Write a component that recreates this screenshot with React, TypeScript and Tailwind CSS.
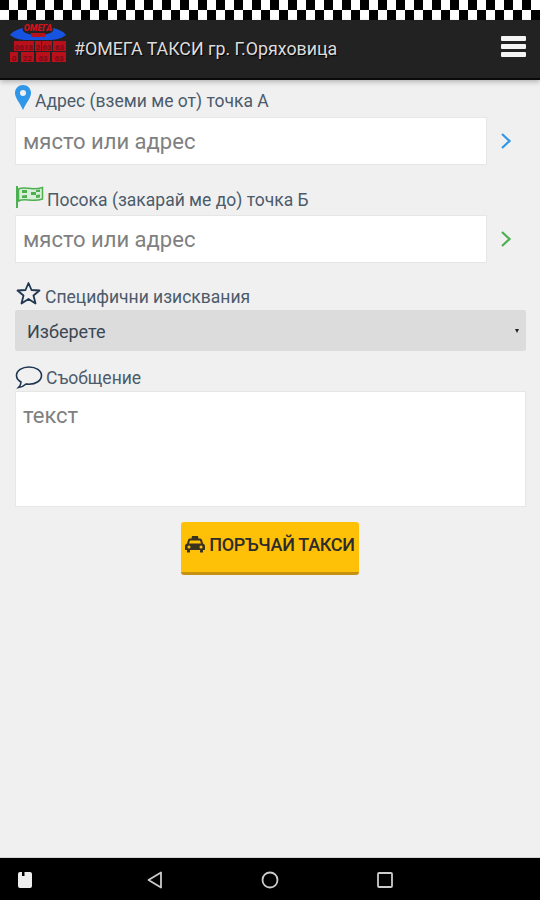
import React from 'react';

const labelClass = 'text-[17.5px] leading-[20px] text-[#4b5b6b]';
const inputClass =
  'w-[472px] h-[48px] bg-white border border-[#e6e6e6] px-[7px] text-[22px] text-[#555] placeholder:text-[#808080] outline-none';

const tiles = [
  { x: 5, y: 18, w: 20, t: '0618' },
  { x: 26, y: 18, w: 6, t: '2' },
  { x: 33, y: 18, w: 10, t: '63' },
  { x: 44, y: 18, w: 13, t: '63' },
  { x: 1, y: 29, w: 8, t: '0' },
  { x: 12, y: 29, w: 13, t: '22' },
  { x: 27, y: 29, w: 14, t: '63' },
  { x: 43, y: 29, w: 14, t: '63' },
];

const Logo = () => (
  <svg width="58" height="40" viewBox="0 0 58 40" className="shrink-0 self-start mt-[3px]">
    <path d="M1 12 C4 8 9 6 14 5 C12 9 18 12 29 12 C40 12 46 9 44 5 C49 6 54 8 57 12 C52 16 46 17 40 17 L18 17 C12 17 6 16 1 12 Z" fill="#1553e0" />
    <text x="29" y="8" textAnchor="middle" fontSize="9" fontWeight="900" fontStyle="italic" fill="#d4111c" fontFamily="Roboto, sans-serif">ОМЕГА</text>
    <rect x="22" y="10" width="14" height="4" fill="#b5121c" />
    {tiles.map((c, i) => (
      <g key={i}>
        <rect x={c.x} y={c.y} width={c.w} height={10} fill="#b9101c" />
        <text x={c.x + c.w / 2} y={c.y + 8.5} textAnchor="middle" fontSize="8" fontWeight="700" fill="#7a0a12" fontFamily="Roboto, sans-serif">{c.t}</text>
      </g>
    ))}
  </svg>
);

const Chevron = ({ color }: { color: string }) => (
  <svg width="12" height="18" viewBox="0 0 12 18" className="ml-[13px] shrink-0">
    <path d="M2 2 L9.500 9 L2 16" fill="none" stroke={color} strokeWidth="2.200" />
  </svg>
);

export default function App() {
  return (
    <div className="w-[540px] h-[900px] flex flex-col bg-[#f0f0f0] overflow-hidden font-['Roboto',sans-serif]">
      {/* шахматна лента */}
      <div className="h-[20px] shrink-0 bg-[repeating-conic-gradient(#fff_0_25%,#000_0_50%)] bg-[length:18px_20px]" />

      <header className="h-[60px] shrink-0 flex items-center pl-[9px] pr-[14px] bg-[#222] border-b-[2px] border-[#0a0a0a] shadow-[0_2px_5px_rgba(0,0,0,0.25)]">
        <Logo />
        <span className="ml-[7px] text-[17.8px] text-[#dcdcdc] [text-shadow:1px_1px_1px_#000]">#ОМЕГА ТАКСИ гр. Г.Оряховица</span>
        <div className="ml-auto w-[25px] flex flex-col gap-[3px] -mt-[5px]">
          <div className="h-[5px] rounded-[1px] bg-[#f4f4f4]" />
          <div className="h-[5px] rounded-[1px] bg-[#f4f4f4]" />
          <div className="h-[5px] rounded-[1px] bg-[#f4f4f4]" />
        </div>
      </header>

      <main className="flex-1 px-[15px] pt-[5px] border-b border-[#d4d4d4]">
        <div className="h-[32px] flex gap-[4px]">
          <svg width="16" height="25" viewBox="0 0 16 25" className="shrink-0">
            <path fillRule="evenodd" d="M8 0 C3.500 0 0 3.500 0 8 C0 13 5 18 8 25 C11 18 16 13 16 8 C16 3.500 12.500 0 8 0 Z M8 5 A3 3 0 1 1 8 11 A3 3 0 1 1 8 5 Z" fill="#2f96e8" />
          </svg>
          <span className={`${labelClass} mt-[6px]`}>Адрес (вземи ме от) точка А</span>
        </div>
        <div className="flex items-center">
          <input className={inputClass} placeholder="място или адрес" readOnly />
          <Chevron color="#2f96e8" />
        </div>

        <div className="h-[30px] mt-[20px] flex gap-[3px]">
          <svg width="29" height="24" viewBox="0 0 29 24" className="shrink-0">
            <path d="M2 1 L2 23" stroke="#4caf50" strokeWidth="2" />
            <path d="M3.500 4 C10 1 16 6 27.500 2.500 L27.500 14 C17 18 10 12 3.500 16 Z" fill="#d9efd9" stroke="#4caf50" strokeWidth="1.500" />
            <path d="M7 5 L12 5 L12 8 L7 8 Z M16 7 L21 7 L21 10 L16 10 Z M7 10.500 L12 10 L12 13 L7 13 Z M21 5 L25 4.500 L25 7 L21 7 Z M21 10 L25 9.500 L25 12.500 L21 13 Z" fill="#4caf50" />
          </svg>
          <span className={`${labelClass} mt-[5px]`}>Посока (закарай ме до) точка Б</span>
        </div>
        <div className="flex items-center">
          <input className={inputClass} placeholder="място или адрес" readOnly />
          <Chevron color="#4caf50" />
        </div>

        <div className="h-[29px] mt-[18px] flex gap-[4px]">
          <svg width="25" height="24" viewBox="0 0 25 24" className="shrink-0 ml-[1px]">
            <path d="M12.500 2 L15.500 9 L23.500 9.500 L17.500 14.500 L19.500 22.500 L12.500 18 L5.500 22.500 L7.500 14.500 L1.500 9.500 L9.500 9 Z" fill="none" stroke="#1f3550" strokeWidth="1.800" strokeLinejoin="round" />
          </svg>
          <span className={`${labelClass} mt-[6px]`}>Специфични изисквания</span>
        </div>
        <div className="h-[41px] -mr-[1px] flex items-center pl-[12px] pr-[7px] bg-[#dcdcdc] rounded-[2px]">
          <span className="text-[18px] mt-[1px] text-[#3a4654]">Изберете</span>
          <div className="ml-auto w-0 h-0 border-x-[2px] border-x-transparent border-t-[4px] border-t-[#222]" />
        </div>

        <div className="h-[26px] mt-[14px] flex gap-[3px]">
          <svg width="28" height="24" viewBox="0 0 28 24" className="shrink-0">
            <path d="M14 2 C7 2 1.500 5.500 1.500 10.500 C1.500 13.500 3.500 15.500 6 17 C6 19 5 21 3.500 22.500 C7 22 9.500 20.500 11 19 C12 19 13 19.200 14 19.200 C21 19.200 26.500 15.500 26.500 10.500 C26.500 5.500 21 2 14 2 Z" fill="none" stroke="#1f3550" strokeWidth="1.600" />
          </svg>
          <span className={`${labelClass} mt-[3px]`}>Съобщение</span>
        </div>
        <textarea
          className="block w-[511px] h-[116px] resize-none bg-white border border-[#e6e6e6] px-[7px] py-[12px] text-[22px] leading-[24px] placeholder:text-[#808080] outline-none"
          placeholder="текст"
          readOnly
        />

        <div className="flex justify-center mt-[15px]">
          <button className="w-[178px] h-[53px] pb-[5px] flex items-center justify-center gap-[4px] bg-[#ffc107] border-b-[3px] border-[#c69214] rounded-[3px] text-[#2c2c2c]">
            <svg width="20" height="17" viewBox="0 0 20 17" className="shrink-0">
              <path fillRule="evenodd" d="M7 0 H13 L13.500 2.500 H15 C16 2.500 16.500 3 17 4 L18 7.500 C19.200 8 20 9 20 10 V14 H18 V16.500 H15 V14 H5 V16.500 H2 V14 H0 V10 C0 9 0.800 8 2 7.500 L3 4 C3.500 3 4 2.500 5 2.500 H6.500 Z M5 4.500 L4 7.500 H16 L15 4.500 Z M4 9.500 A1.500 1.500 0 1 0 4 12.500 A1.500 1.500 0 1 0 4 9.500 Z M16 9.500 A1.500 1.500 0 1 0 16 12.500 A1.500 1.500 0 1 0 16 9.500 Z" fill="#3a3320" />
            </svg>
            <span className="text-[18px] font-medium tracking-[-0.3px] whitespace-nowrap">ПОРЪЧАЙ ТАКСИ</span>
          </button>
        </div>
      </main>

      <nav className="h-[42px] pt-[2px] shrink-0 flex items-center bg-black">
        <svg width="16" height="18" viewBox="0 0 16 18" className="ml-[17px]">
          <path d="M1 3 Q1 1 3 1 H5 V5 H7.500 V1 H13 Q15 1 15 3 V15 Q15 17 13 17 H3 Q1 17 1 15 Z" fill="#eee" />
        </svg>
        <svg width="16" height="18" viewBox="0 0 16 18" className="ml-[114px]">
          <path d="M14 1.500 V16.500 L1.500 9 Z" fill="none" stroke="#ccc" strokeWidth="1.800" strokeLinejoin="round" />
        </svg>
        <svg width="18" height="18" viewBox="0 0 18 18" className="ml-[98px]">
          <circle cx="9" cy="9" r="7.500" fill="none" stroke="#ccc" strokeWidth="1.800" />
        </svg>
        <svg width="16" height="16" viewBox="0 0 16 16" className="ml-[98px]">
          <rect x="1" y="1" width="14" height="14" rx="1" fill="none" stroke="#ccc" strokeWidth="1.800" />
        </svg>
      </nav>
    </div>
  );
}
